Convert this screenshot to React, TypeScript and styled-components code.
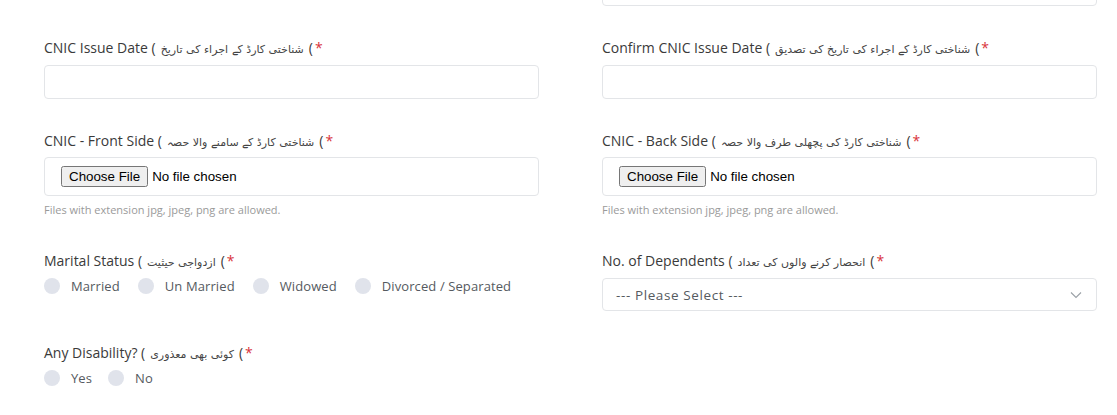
import React from 'react';
import styled, { createGlobalStyle } from 'styled-components';

const GlobalStyle = createGlobalStyle`
  html, body {
    margin: 0;
    padding: 0;
    background: #ffffff;
  }
  body {
    font-family: 'Open Sans', 'Noto Sans', sans-serif;
    overflow: hidden;
  }
`;

const Page = styled.div`
  width: 1117px;
  height: 415px;
  overflow: hidden;
  box-sizing: border-box;
  padding: 0 20px 0 44px;
`;

const Form = styled.div`
  display: grid;
  grid-template-columns: 495px 495px;
  column-gap: 63px;
  row-gap: 32px;
  margin-top: -28px;
`;

const Field = styled.div<{ $extra?: number }>`
  display: flex;
  flex-direction: column;
  margin-top: ${(p) => p.$extra ?? 0}px;
`;

const Label = styled.label<{ $gap?: number }>`
  display: block;
  height: 20px;
  line-height: 20px;
  font-size: 14px;
  font-weight: 500;
  color: #3a3a3a;
  white-space: nowrap;
  margin-bottom: ${(p) => p.$gap ?? 7}px;
`;

const Urdu = styled.span`
  font-family: 'DejaVu Sans', 'Noto Sans', sans-serif;
  font-size: 11px;
  color: #444;
  margin: 0 5px;
  unicode-bidi: isolate;
`;

const Paren = styled.span`
  unicode-bidi: isolate;
  direction: ltr;
`;

const Star = styled.span`
  color: #d9343a;
  margin-left: 2px;
`;

const TextBox = styled.input`
  box-sizing: border-box;
  width: 100%;
  height: 34px;
  border: 1px solid #e3e5e8;
  border-radius: 4px;
  background: #fff;
  outline: none;
`;

const FileBox = styled.div`
  box-sizing: border-box;
  height: 39px;
  border: 1px solid #e3e5e8;
  border-radius: 4px;
  display: flex;
  align-items: center;
  padding: 0 16px;
  input {
    font-family: 'Liberation Sans', Arial, sans-serif;
    font-size: 13.33px;
  }
`;

const Help = styled.div`
  font-size: 11px;
  color: #9a9a9a;
  margin-top: 6px;
  height: 16px;
`;

const RadioRow = styled.div<{ $gap: number }>`
  display: flex;
  align-items: center;
  gap: ${(p) => p.$gap}px;
  height: 16px;
`;

const RadioItem = styled.label`
  display: flex;
  align-items: center;
  gap: 11px;
  font-size: 13px;
  letter-spacing: 0.1px;
  color: #555a60;
`;

const Dot = styled.span`
  width: 16px;
  height: 16px;
  border-radius: 50%;
  background: #e0e3eb;
  display: inline-block;
`;

const Select = styled.div`
  box-sizing: border-box;
  height: 33px;
  border: 1px solid #e3e5e8;
  border-radius: 4px;
  display: flex;
  align-items: center;
  justify-content: space-between;
  padding: 0 14px 0 13px;
  font-size: 13.5px;
  letter-spacing: 0.6px;
  color: #555a60;
`;

const Empty = styled.div``;

const Radios: React.FC<{ options: string[]; name: string; gap: number }> = ({ options, name, gap }) => (
  <RadioRow $gap={gap}>
    {options.map((o) => (
      <RadioItem key={o + name}>
        <Dot />
        {o}
      </RadioItem>
    ))}
  </RadioRow>
);

const FieldLabel: React.FC<{ en: string; ur: string; gap?: number }> = ({ en, ur, gap }) => (
  <Label $gap={gap}>
    <Paren>{en} (</Paren>
    <Urdu dir="rtl">{ur}</Urdu>
    <Paren>(</Paren>
    <Star>*</Star>
  </Label>
);

export default function App() {
  return (
    <Page>
      <GlobalStyle />
      <Form>
        <Empty />
        <Field>
          <TextBox />
        </Field>

        <Field>
          <FieldLabel en="CNIC Issue Date" ur="شناختی کارڈ کے اجراء کی تاریخ" />
          <TextBox />
        </Field>
        <Field>
          <FieldLabel en="Confirm CNIC Issue Date" ur="شناختی کارڈ کے اجراء کی تاریخ کی تصدیق" />
          <TextBox />
        </Field>

        <Field>
          <FieldLabel en="CNIC - Front Side" ur="شناختی کارڈ کے سامنے والا حصہ" gap={6} />
          <FileBox>
            <input type="file" />
          </FileBox>
          <Help>Files with extension jpg, jpeg, png are allowed.</Help>
        </Field>
        <Field>
          <FieldLabel en="CNIC - Back Side" ur="شناختی کارڈ کی پچھلی طرف والا حصہ" gap={6} />
          <FileBox>
            <input type="file" />
          </FileBox>
          <Help>Files with extension jpg, jpeg, png are allowed.</Help>
        </Field>

        <Field $extra={1}>
          <FieldLabel en="Marital Status" ur="ازدواجی حیثیت" />
          <Radios name="marital" gap={18} options={['Married', 'Un Married', 'Widowed', 'Divorced / Separated']} />
        </Field>
        <Field $extra={1}>
          <FieldLabel en="No. of Dependents" ur="انحصار کرنے والوں کی تعداد" />
          <Select>
            <span>--- Please Select ---</span>
            <svg width="12" height="8" viewBox="0 0 12 8" fill="none">
              <path d="M1 1.5l5 5 5-5" stroke="#9aa0a6" strokeWidth="1.1" />
            </svg>
          </Select>
        </Field>

        <Field>
          <FieldLabel en="Any Disability?" ur="کوئی بھی معذوری" />
          <Radios name="disability" gap={16} options={['Yes', 'No']} />
        </Field>
        <Empty />
      </Form>
    </Page>
  );
}
